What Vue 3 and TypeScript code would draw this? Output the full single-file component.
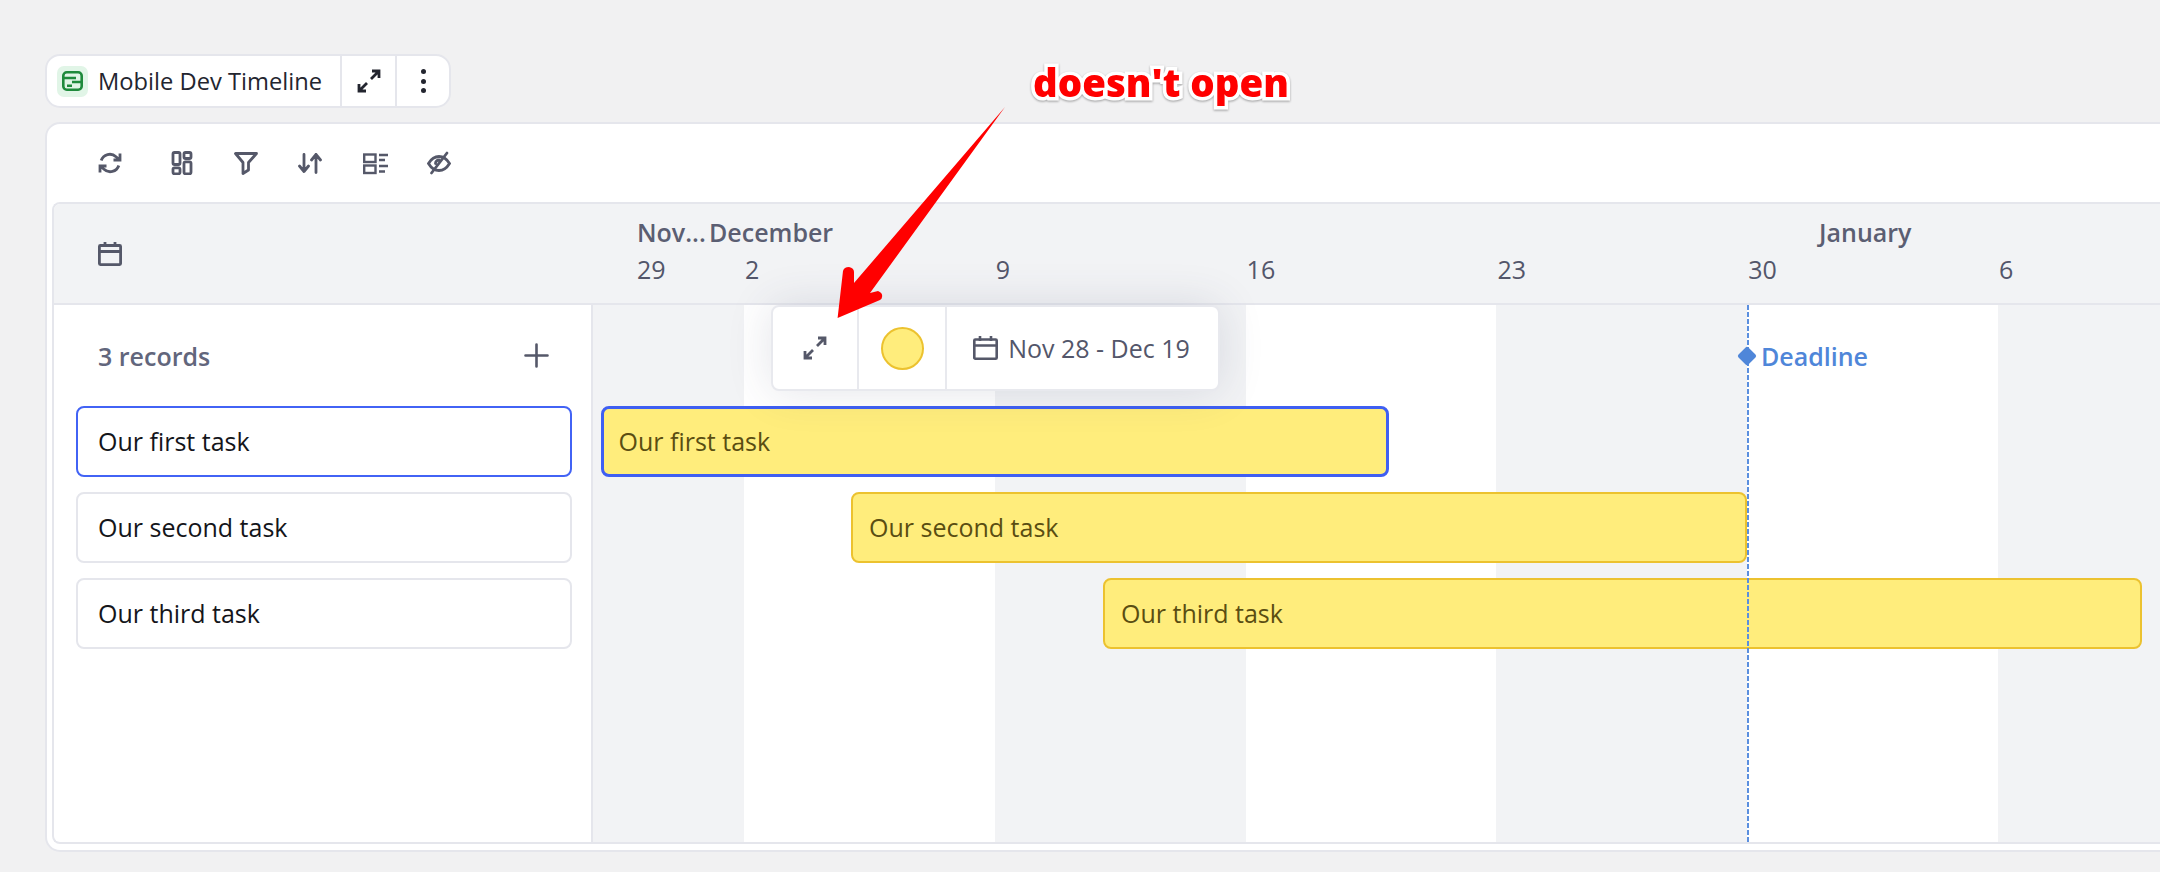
<script setup lang="ts">
interface Week { day: string; width: number; pad: number; shaded: boolean }
interface Month { label: string; width: number }
interface Task { id: number; name: string; left: number; width: number; top: number; selected?: boolean }

const months: Month[] = [
  { label: 'Nov...', width: 72 },
  { label: 'December', width: 1110 },
  { label: 'January', width: 120 },
]

const weeks: Week[] = [
  { day: '29', width: 151, pad: 44, shaded: true },
  { day: '2', width: 250.8, pad: 1, shaded: false },
  { day: '9', width: 250.8, pad: 1, shaded: true },
  { day: '16', width: 250.8, pad: 1, shaded: false },
  { day: '23', width: 250.8, pad: 1, shaded: true },
  { day: '30', width: 250.8, pad: 1, shaded: false },
  { day: '6', width: 250.8, pad: 1, shaded: true },
]

// left/top are relative to the timeline origin
const tasks: Task[] = [
  { id: 1, name: 'Our first task', left: 8, width: 788, top: 101, selected: true },
  { id: 2, name: 'Our second task', left: 258, width: 896, top: 187 },
  { id: 3, name: 'Our third task', left: 510, width: 1039, top: 273 },
]
</script>

<template>
  <div class="page">
    <div class="chip">
      <div class="chip-title">
        <span class="logo">
          <svg width="21" height="20" viewBox="0 0 21 20" fill="none" stroke="#1f8a3c" stroke-width="2.600">
            <rect x="1.300" y="1.300" width="18.400" height="17.400" rx="3.500" />
            <path d="M2 7h12M10 11h9M5 14.800h5" />
          </svg>
        </span>
        <span>Mobile Dev Timeline</span>
      </div>
      <button class="chip-btn">
        <svg width="24" height="24" viewBox="0 0 24 24" fill="none" stroke="#23252f" stroke-width="2.800">
          <path d="M14 10l8-8M15 2h7v7M10 14l-8 8M2 15v7h7" />
        </svg>
      </button>
      <button class="chip-btn kebab">
        <i></i><i></i><i></i>
      </button>
    </div>

    <div class="card">
      <div class="toolbar">
        <svg class="sync" width="24" height="24" viewBox="0 0 24 24" fill="none" stroke="#555869" stroke-width="2.800">
          <path d="M22 2.500V9h-6.500M2 21.500V15h6.500M3.200 9.500A9 9 0 0 1 18 5.800L22 9M2 15l4 3.200a9 9 0 0 0 14.800-3.700" />
        </svg>
        <svg width="24" height="24" viewBox="0 0 24 24" fill="none" stroke="#555869" stroke-width="2.800">
          <rect x="3" y="1.500" width="7" height="12" rx="1.500" />
          <rect x="3" y="16.800" width="7" height="6" rx="1.500" />
          <rect x="14" y="1.500" width="7" height="6" rx="1.500" />
          <rect x="14" y="10.800" width="7" height="12" rx="1.500" />
        </svg>
        <svg width="24" height="24" viewBox="0 0 24 24" fill="none" stroke="#555869" stroke-width="2.800" stroke-linejoin="round">
          <path d="M1.500 2.500h21l-8 9v7.500l-5.500 3.500V11.500z" />
        </svg>
        <svg width="24" height="24" viewBox="0 0 24 24" fill="none" stroke="#555869" stroke-width="2.800" stroke-linecap="round" stroke-linejoin="round">
          <path d="M6 3.500v17M1.500 15l4.500 5.500 4.500-5.500M18 3.500v18M13.500 9L18 3.500 22.500 9" />
        </svg>
        <svg class="list-icon" width="25" height="24" viewBox="0 0 25 24" fill="none" stroke="#555869" stroke-width="2.400">
          <rect x="1.200" y="3.500" width="11.300" height="7.500" />
          <rect x="1.200" y="14.500" width="11.300" height="7.500" />
          <path d="M16 4h9M16 9h6M16 15h9M16 20.500h6" />
        </svg>
        <svg width="24" height="24" viewBox="0 0 24 24" fill="none" stroke="#555869" stroke-width="2.800" stroke-linecap="round">
          <path d="M1.500 12.500C4.500 7.500 8 5.500 12 5.500s7.500 2 10.500 7c-3 5-6.500 7-10.500 7s-7.500-2-10.500-7z" />
          <path d="M8.500 12.500A3.500 3.500 0 0 1 12 9M20 2L4.500 22" />
        </svg>
      </div>

      <div class="board">
        <div class="board-head">
          <div class="head-left">
            <svg width="24" height="24" viewBox="0 0 24 24" fill="none" stroke="#555869" stroke-width="2.800">
              <rect x="1.400" y="3.500" width="21.200" height="19.100" rx="1" />
              <path d="M1.200 9.500h21.600M7 0v5M17 0v5" />
            </svg>
          </div>
          <div class="head-right">
            <div class="month-row">
              <span v-for="m in months" :key="m.label" :style="{ width: m.width + 'px' }">{{ m.label }}</span>
            </div>
            <div class="day-row">
              <span
                v-for="w in weeks"
                :key="w.day"
                :style="{ width: w.width + 'px', paddingLeft: w.pad + 'px' }"
              >{{ w.day }}</span>
            </div>
          </div>
        </div>

        <div class="board-body">
          <aside class="records">
            <div class="records-head">
              <span>3 records</span>
              <svg width="25" height="25" viewBox="0 0 25 25" fill="none" stroke="#555869" stroke-width="2.600" stroke-linecap="round">
                <path d="M12.500 1.500v22M1.500 12.500h22" />
              </svg>
            </div>
            <div
              v-for="t in tasks"
              :key="t.id"
              class="record"
              :class="{ active: t.selected }"
            >{{ t.name }}</div>
          </aside>

          <div class="timeline">
            <div class="stripes">
              <div
                v-for="w in weeks"
                :key="w.day"
                class="stripe"
                :class="{ shaded: w.shaded }"
                :style="{ width: w.width + 'px' }"
              ></div>
            </div>

            <div
              v-for="t in tasks"
              :key="t.id"
              class="bar"
              :class="{ selected: t.selected }"
              :style="{ left: t.left + 'px', top: t.top + 'px', width: t.width + 'px' }"
            >{{ t.name }}</div>

            <div class="deadline-line"></div>
            <div class="deadline">
              <i class="diamond"></i>
              <span>Deadline</span>
            </div>

            <div class="popover">
              <div class="pop-cell pop-expand">
                <svg width="24" height="24" viewBox="0 0 24 24" fill="none" stroke="#555869" stroke-width="2.800">
                  <path d="M14 10l8-8M15 2h7v7M10 14l-8 8M2 15v7h7" />
                </svg>
              </div>
              <div class="pop-cell pop-color"><i class="dot"></i></div>
              <div class="pop-cell pop-date">
                <svg width="25" height="24" viewBox="0 0 25 24" fill="none" stroke="#555869" stroke-width="2.600">
                  <rect x="1.300" y="3.500" width="22.400" height="19.200" rx="1" />
                  <path d="M1.200 9.500h22.600M7 0v5M18 0v5" />
                </svg>
                <span>Nov 28 - Dec 19</span>
              </div>
            </div>
          </div>
        </div>
      </div>
    </div>

    <svg class="arrow" width="200" height="230" viewBox="0 0 200 230">
      <path
        d="M175 7L40 193L48 191Q53 193 52 197Q52 199 50 200L7.600 218L13 171Q14 167 19 167Q24 168 24 172L24 183Z"
        fill="#ff0000"
      />
    </svg>
    <div class="note">doesn't open</div>
  </div>
</template>

<style scoped>
.page {
  position: relative;
  height: 872px;
  box-sizing: border-box;
  padding: 54px 0 0 45px;
  background: #f1f1f2;
  overflow: hidden;
  font-family: "Open Sans", "Noto Sans", sans-serif;
  font-size: 25px;
  color: #53566a;
}

.chip {
  display: inline-flex;
  height: 54px;
  box-sizing: border-box;
  background: #fff;
  border: 2px solid #e5e6ec;
  border-radius: 15px;
  vertical-align: top;
  font-size: 23.700px;
}

.chip-title {
  display: flex;
  align-items: center;
  gap: 10px;
  width: 293px;
  box-sizing: border-box;
  padding-left: 10px;
  color: #23252f;
}

.logo {
  width: 31px;
  height: 31px;
  border-radius: 7px;
  background: #e1f5e7;
  display: flex;
  align-items: center;
  justify-content: center;
}

.chip-btn {
  width: 55px;
  padding: 0;
  border: 0;
  border-left: 2px solid #e5e6ec;
  background: none;
  display: flex;
  align-items: center;
  justify-content: center;
}

.kebab {
  width: 54px;
  flex-direction: column;
  gap: 4.500px;
}

.kebab i {
  width: 5px;
  height: 5px;
  border-radius: 50%;
  background: #23252f;
}

.card {
  display: block;
  margin-top: 14px;
  margin-right: -20px;
  height: 730px;
  box-sizing: border-box;
  background: #fff;
  border: 2px solid #e5e6ec;
  border-radius: 15px;
  padding: 0 0 6px 5px;
}

.toolbar {
  display: flex;
  align-items: center;
  height: 78px;
  padding-left: 46px;
  gap: 40px;
}

.sync {
  margin-right: 8px;
}

.list-icon {
  margin-left: 1px;
  margin-right: -1px;
}

.board {
  height: 642px;
  box-sizing: border-box;
  border: 2px solid #e5e6ec;
  border-right: 0;
  border-radius: 8px 0 0 8px;
  overflow: hidden;
  display: flex;
  flex-direction: column;
}

.board-head {
  display: flex;
  height: 99px;
  flex: none;
  background: #f2f3f5;
  border-bottom: 2px solid #e5e6ec;
  box-sizing: content-box;
}

.head-left {
  width: 539px;
  flex: none;
  display: flex;
  align-items: center;
  padding-left: 44px;
  box-sizing: border-box;
}

.head-right {
  flex: 1;
  padding-top: 12px;
  white-space: nowrap;
  overflow: hidden;
}

.month-row {
  display: flex;
  padding-left: 44px;
  font-weight: 600;
  line-height: 33px;
  color: #5b5e72;
}

.month-row span {
  flex: none;
}

.day-row {
  display: flex;
  line-height: 33px;
  margin-top: 4px;
}

.day-row span {
  flex: none;
  box-sizing: border-box;
}

.board-body {
  flex: 1;
  display: flex;
  min-height: 0;
}

.records {
  width: 539px;
  flex: none;
  box-sizing: border-box;
  border-right: 2px solid #e5e6ec;
  padding: 0 19px 0 22px;
}

.records-head {
  height: 101px;
  box-sizing: border-box;
  display: flex;
  align-items: center;
  justify-content: space-between;
  padding: 0 23px 0 22px;
  font-weight: 600;
  color: #62667c;
}

.record {
  height: 71px;
  margin-bottom: 15px;
  box-sizing: border-box;
  border: 2px solid #e5e6ec;
  border-radius: 8px;
  padding: 0 0 2px 20px;
  display: flex;
  align-items: center;
  color: #14151a;
}

.record.active {
  border-color: #4263f5;
}

.timeline {
  position: relative;
  flex: 1;
}

.stripes {
  display: flex;
  height: 100%;
}

.stripe {
  flex: none;
  background: #fff;
}

.stripe.shaded {
  background: #f2f3f5;
}

.bar {
  position: absolute;
  height: 71px;
  box-sizing: border-box;
  background: #ffed7c;
  border: 2px solid #ecc22f;
  border-radius: 8px;
  padding: 0 0 2px 16px;
  display: flex;
  align-items: center;
  color: #5a4d12;
  white-space: nowrap;
}

.bar.selected {
  border: 3.500px solid #3f5ff2;
  padding-left: 14.500px;
}

.deadline-line {
  position: absolute;
  left: 1154px;
  top: 0;
  bottom: 0;
  width: 1.500px;
  background: repeating-linear-gradient(to bottom, #5b8fdf 0 5px, transparent 5px 7px);
}

.deadline {
  position: absolute;
  left: 1145px;
  top: 34px;
  display: flex;
  align-items: center;
  gap: 7px;
  font-weight: 600;
  color: #4f86d9;
}

.diamond {
  width: 14px;
  height: 14px;
  margin-left: 2px;
  background: #4f86d9;
  border-radius: 2px;
  transform: rotate(45deg);
}

.popover {
  position: absolute;
  left: 178px;
  top: 0;
  height: 86px;
  display: flex;
  box-sizing: border-box;
  background: #fff;
  border: 2px solid #e8e9ee;
  border-radius: 8px;
  box-shadow: 0 0 45px rgba(60, 65, 100, 0.14);
  z-index: 2;
}

.pop-cell {
  display: flex;
  align-items: center;
  justify-content: center;
  box-sizing: border-box;
  border-left: 2px solid #e8e9ee;
}

.pop-expand {
  width: 84px;
  border-left: 0;
}

.pop-color {
  width: 88px;
}

.dot {
  width: 43px;
  height: 43px;
  box-sizing: border-box;
  border-radius: 50%;
  background: #ffed7c;
  border: 2px solid #ecc22f;
}

.pop-date {
  width: 273px;
  padding-right: 2px;
  gap: 10px;
  white-space: nowrap;
}

.arrow {
  position: absolute;
  left: 830px;
  top: 100px;
  z-index: 5;
}

.note {
  position: absolute;
  left: 1033px;
  top: 54px;
  z-index: 5;
  font-size: 38.400px;
  line-height: 56px;
  font-weight: 800;
  color: #ff0000;
  white-space: nowrap;
  -webkit-text-stroke: 7px #fff;
  paint-order: stroke fill;
  filter: drop-shadow(0 1px 1px rgba(0, 0, 0, 0.35));
}
</style>

<style>
html,
body {
  margin: 0;
  background: #f1f1f2;
}
</style>
